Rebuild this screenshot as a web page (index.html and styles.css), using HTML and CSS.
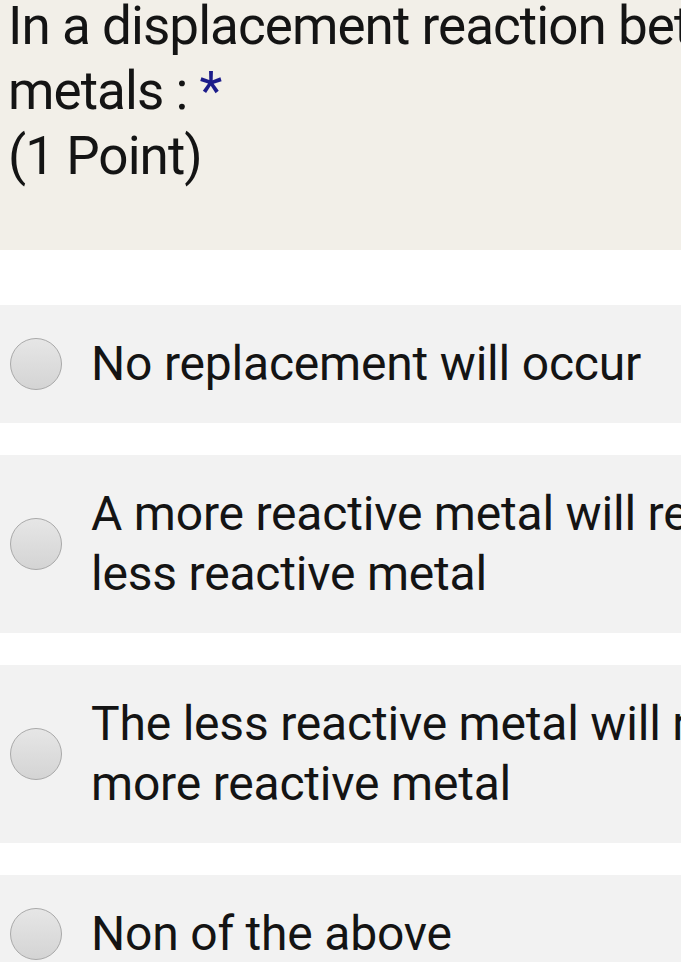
FILE: index.html
```html
<!DOCTYPE html>
<html>
<head>
<meta charset="utf-8">
<link rel="stylesheet" href="styles.css">
</head>
<body>
<div class="page">
  <div class="question">
    <div class="qtext">In a displacement reaction between metals : <span class="req">*</span><br>(1 Point)</div>
  </div>
  <div class="options">
    <label class="option"><span class="radio"></span><span class="otext">No replacement will occur</span></label>
    <label class="option"><span class="radio"></span><span class="otext">A more reactive metal will replace the less reactive metal</span></label>
    <label class="option"><span class="radio"></span><span class="otext">The less reactive metal will replace the more reactive metal</span></label>
    <label class="option"><span class="radio"></span><span class="otext">Non of the above</span></label>
  </div>
</div>
</body>
</html>
```
FILE: styles.css
```css
html, body {
  margin: 0;
  padding: 0;
  background: #ffffff;
  overflow: hidden;
}
.page {
  width: 960px;
  font-family: Roboto, "Noto Sans", sans-serif;
  color: #141414;
}
.question {
  background: #f2efe8;
  padding: 0 0 61px 8px;
}
.qtext {
  font-size: 53px;
  line-height: 65px;
  margin-top: -6px;
  letter-spacing: -0.95px;
}
.req {
  color: #1c1c8a;
}
.options {
  display: flex;
  flex-direction: column;
  gap: 32px;
  padding-top: 55px;
}
.option {
  display: flex;
  align-items: center;
  background: #f2f2f2;
  padding: 29px 0 29px 10px;
}
.radio {
  flex: none;
  width: 50px;
  height: 50px;
  border-radius: 50%;
  border: 1px solid #a9a9a9;
  background: linear-gradient(#e6e6e6, #d4d4d4);
  margin-right: 29px;
}
.otext {
  font-size: 48px;
  line-height: 60px;
  letter-spacing: -0.2px;
}
```
